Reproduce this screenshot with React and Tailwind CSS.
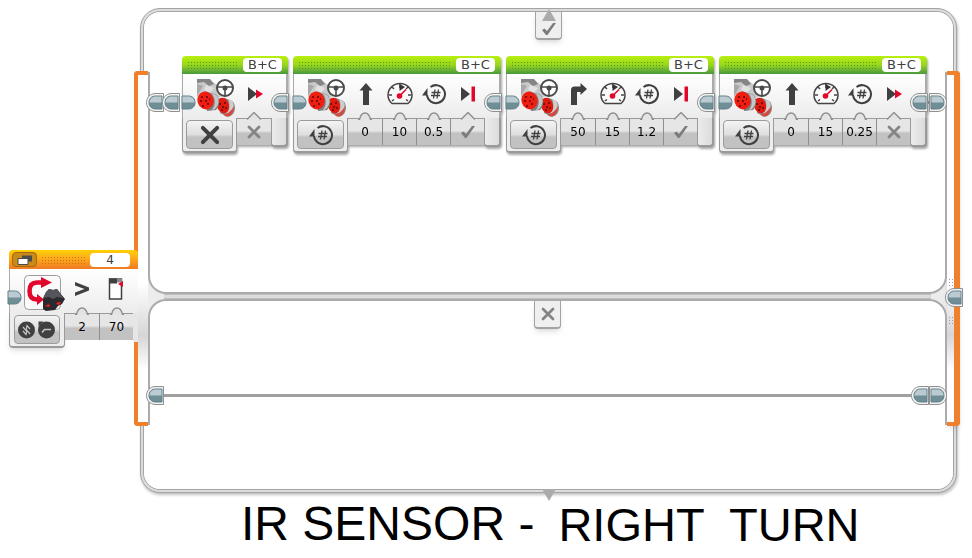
import React from "react";
import clsx from "clsx";

// Connector between blocks. "out" is rounded on the left, "in" on the right.
function Plug({ side = "out", rim = true, className }) {
  return (
    <svg
      viewBox="0 0 18 19"
      className={clsx("w-[18px] h-[19px] shrink-0", side === "in" && "-scale-x-100", className)}
      aria-hidden="true"
    >
      {rim && (
        <path d="M17.500 .5H9C3.500 1 .5 5 .5 9.500S3.500 18 9 18.500h8.500z" fill="#f4f4f4" stroke="#8f8f8f" />
      )}
      <path d="M16 3H9.500C5.500 3 3 5.800 3 9.500S5.500 16 9.500 16H16z" fill="#6f8e96" stroke="#5f7f89" />
      <path d="M15.500 3.500H9.500C6 3.500 3.600 6 3.500 9.500h12z" fill="#bccbd2" />
    </svg>
  );
}

function MotorIcon() {
  return (
    <svg viewBox="0 0 38 38" className="w-[38px] h-[38px]" aria-hidden="true">
      <path d="M0 0h12l8 6 4 12-6 2-9-6-9 4z" fill="#c9c9c9" />
      <path d="M0 0h13l4 5-5 2-5-4-7 1z" fill="#858585" />
      <path d="M0 5l6 2-6 10z" fill="#a8a8a8" />
      <path d="M9 6l8 3-4 5-6-3z" fill="#e2e2e2" />
      {/* back cylinder */}
      <path d="M27 18.500l8 3.500c4 3 4 10 0 14l-4 2-8-4z" fill="#8a8a8a" />
      <path d="M31 20l4 2c3 4 2 10-2 13l-4-1c4-4 4-10 2-14z" fill="#cdcdcd" />
      <path d="M37 27c0 4-1 7-4 10l-4 .500-3-2c4 0 8-3 11-8.500z" fill="#d8483c" />
      <ellipse cx="26" cy="26.500" rx="6" ry="8" fill="#e01a0f" transform="rotate(-18 26 26.500)" />
      <path d="M23 24v2m5-3v2m-3 3h2m2 0v2m-5 1h2" stroke="#5b0703" strokeWidth="1.400" />
      {/* front cylinder */}
      <path d="M8 12.500l10 2.500c5 3 6 11 1 16l-9 1z" fill="#7d7d7d" />
      <path d="M14 14l5 2c4 4 3 10-1 14l-4 2c5-5 5-13 0-18z" fill="#c6c6c6" />
      <ellipse cx="8.500" cy="21.500" rx="8" ry="9" fill="#f01d12" transform="rotate(-18 8.500 21.500)" />
      <path d="M5 17v2m5-2v2M3 22h2m3 0h2m-4 4v2m5-4v2m1-6h1" stroke="#5b0703" strokeWidth="1.500" />
      <circle cx="28" cy="9" r="8" fill="#fff" stroke="#4a4a4a" strokeWidth="2" />
      <path d="M20.500 8h15M28 9v8" stroke="#4a4a4a" strokeWidth="1.600" />
      <circle cx="28" cy="9" r="2.500" fill="#4a4a4a" />
    </svg>
  );
}

function Rotations() {
  return (
    <svg viewBox="0 0 24 24" className="w-6 h-6" fill="none" stroke="#404040" aria-hidden="true">
      <path d="M8.500 5A9 9 0 1 1 5 13" strokeWidth="2" />
      <path d="M0 13.500L5.500 6v7.500z" fill="#404040" stroke="none" />
      <path d="M13 7.500l-1.500 9M16.500 7.500l-1.500 9M9.500 10.500h9M9 13.500h9" strokeWidth="1.300" />
    </svg>
  );
}

function Gauge() {
  return (
    <svg viewBox="0 0 26 24" className="w-[26px] h-6" fill="none" aria-hidden="true">
      <path d="M5 21.500C2.500 19.500 1 16.500 1 13a12 11.500 0 0 1 24 0c0 3.500-1.500 6.500-4 8.500z" fill="#fafafa" stroke="#444" strokeWidth="1.500" />
      <path d="M13 2v4M5 5l2 2M21 5l-2 2M2 13h3M24 13h-3M5 19l2-1.500M21 19l-2-1.500" stroke="#444" strokeWidth="1.500" />
      <path d="M12.500 2l5.500 3-5.500 4z" fill="#333" />
      <path d="M12.500 14l6.500-6.500" stroke="#e2062c" strokeWidth="1.600" />
      <circle cx="12.500" cy="14" r="2.800" fill="#e2062c" />
    </svg>
  );
}

function Straight() {
  return (
    <svg viewBox="0 0 14 22" className="w-[14px] h-[22px]" aria-hidden="true">
      <path d="M7 0l6.500 7.500H10V22H4V7.500H.5z" fill="#404040" />
    </svg>
  );
}

function TurnRight() {
  return (
    <svg viewBox="0 0 17 22" className="w-[17px] h-[22px]" aria-hidden="true">
      <path d="M1 22V7q0-3.500 3.500-3.500h6V0L17 6l-6.500 6V9H7v13z" fill="#404040" />
    </svg>
  );
}

function Brake() {
  return (
    <svg viewBox="0 0 16 16" className="w-4 h-4" aria-hidden="true">
      <path d="M1 1l9 7-9 7z" fill="#404040" />
      <path d="M11.500 .500H15v15h-3.500z" fill="#e2062c" />
    </svg>
  );
}

function Coast() {
  return (
    <svg viewBox="0 0 16 16" className="w-4 h-4" aria-hidden="true">
      <path d="M1 1l9 7-9 7z" fill="#404040" />
      <path d="M9 3.500l7 4.500-7 4.500z" fill="#e2062c" />
    </svg>
  );
}

function Tick({ className }) {
  return (
    <svg viewBox="0 0 14 14" className={clsx("w-[14px] h-[14px]", className)} aria-hidden="true">
      <path d="M0 8l2.500-1.500L5 9l6-8h3L5.500 13H4z" fill="#7c7c7c" />
    </svg>
  );
}

function Cross({ className = "w-[14px] h-[14px] text-[#848484]" }) {
  return (
    <svg viewBox="0 0 14 14" className={className} aria-hidden="true">
      <path d="M2 2l10 10M12 2L2 12" stroke="currentColor" strokeWidth="2.800" strokeLinecap="round" />
    </svg>
  );
}

function InfraredIcon() {
  return (
    <svg viewBox="0 0 42 38" className="w-[42px] h-[38px]" aria-hidden="true">
      <rect x=".5" y=".5" width="36" height="34" rx="4" fill="#fafafa" stroke="#9c9c9c" />
      <path d="M20 7.500h-7c-5 0-7.500 3-7.500 8.500s2.500 8.500 7.500 8.500h2" fill="none" stroke="#e2062c" strokeWidth="4.500" />
      <path d="M17 2l11 5.500L17 13zM13 19l7 5.500-7 5.500z" fill="#e2062c" />
      <path d="M19 24l3-7 3-3 4 1 4-1 3 4 5 6-3 5-4 2-3 4-9 1-3-2z" fill="#29292e" />
      <path d="M21 19l4-5 4 1 4-1 3 4 3 5-6-1-4 2-4-2-6 1z" fill="#54545a" />
      <path d="M21 31c2-1 3-2 5-1l-1 2zM32 29c1-2 3-2 5-2l-2 3z" fill="#f02020" />
    </svg>
  );
}

function CompareIcon() {
  return (
    <svg viewBox="0 0 38 18" className="w-[38px] h-[18px]" fill="none" aria-hidden="true">
      <circle cx="8.500" cy="9" r="8.500" fill="#404040" />
      <circle cx="28.500" cy="9" r="8.500" fill="#404040" />
      <path d="M5 6l3 3.500 1-5 3 3.500M5 10l3 3.500 1-4 3 3.500" stroke="#c4c4c4" strokeWidth="1.200" />
      <path d="M24 11.500l2.500-3H33" stroke="#c4c4c4" strokeWidth="1.600" />
      <path d="M20.500 5.500V.500h5z" fill="#404040" />
    </svg>
  );
}

function PortValue() {
  return (
    <svg viewBox="0 0 16 22" className="w-4 h-[22px]" aria-hidden="true">
      <rect x="1.500" y="1" width="12" height="20" fill="#fff" stroke="#404040" strokeWidth="1.500" />
      <path d="M1 .500h8v5H1z" fill="#404040" />
      <path d="M9 .500h5v4H9z" fill="#8a8a8a" />
      <path d="M10 6l5-3v6z" fill="#e2062c" />
    </svg>
  );
}

function Greater() {
  return (
    <svg viewBox="0 0 16 14" className="w-4 h-[14px]" aria-hidden="true">
      <path d="M1 0l14 5.500v3L1 14v-3.500L10.500 7 1 3.500z" fill="#404040" />
    </svg>
  );
}

// Small shape on the upper edge of a parameter field
function Notch({ pointed }) {
  return (
    <svg viewBox="0 0 14 8" className="absolute -top-[7px] left-[10px] w-[14px] h-2" aria-hidden="true">
      <path
        d={pointed ? "M0 7.500L7 .500l7 7" : "M0 7.500h1.500C2.500 3 4 1 7 1s4.500 2 5.500 6.500H14"}
        fill="#e3e3e3"
        stroke="#8e8e8e"
        strokeWidth="1.400"
      />
    </svg>
  );
}

function Param({ name, value, first }) {
  const isFlag = typeof value === "boolean";
  return (
    <div
      className={clsx(
        "relative w-[34px] h-[27px] border-t border-t-[#9a9a9a] bg-linear-to-b from-[#e6e6e6] from-45% to-[#c2c2c2] to-55%",
        !first && "border-l border-l-[#8e8e8e]"
      )}
    >
      <Notch pointed={isFlag} />
      {isFlag ? (
        <button type="button" aria-label={name} className="flex w-full h-full items-center justify-center">
          {value ? <Tick /> : <Cross />}
        </button>
      ) : (
        <input aria-label={name} defaultValue={value} className="w-full h-full text-center text-xs text-black outline-none" />
      )}
    </div>
  );
}

const dots = "h-2 bg-[radial-gradient(currentColor_1px,transparent_1px)] bg-size-[3px_3px]";

const modeButton =
  "flex h-[29px] w-full items-center justify-center rounded-sm border border-[#9b9b9b] bg-linear-to-b from-[#f4f4f4] via-[#dedede] via-50% to-[#c2c2c2] to-60%";

function Block({ mode, params }) {
  return (
    <article className="relative shrink-0 drop-shadow-[1px_2px_1px_rgba(0,0,0,0.35)]">
      <header className="flex h-[18px] items-center gap-1 rounded-t bg-linear-to-b from-[#b9f010] via-[#98d619] to-[#46983a] pl-[5px] pr-[6px]">
        <span className={clsx(dots, "flex-1 text-[#4f9a22]")} />
        <input
          aria-label="Motor ports"
          defaultValue="B+C"
          className="w-[39px] h-[14px] rounded-sm bg-white text-center text-[13px] text-[#404040] outline-none"
        />
      </header>
      <div className="flex h-[44px] items-start border-l border-r-2 border-[#ababab] bg-linear-to-b from-white to-[#ececec]">
        <div className="w-[54px] pl-[14px] pt-[5px]">
          <MotorIcon />
        </div>
        {params.map((p) => (
          <div key={p.name} className="flex h-10 w-[34px] items-center justify-center pl-px">
            {p.icon}
          </div>
        ))}
        <div className="w-[15px]" />
      </div>
      <div className="flex items-start">
        <div className="w-[55px] h-[35px] rounded-b border-x border-b-2 border-[#9a9a9a] bg-[#ededed] px-[3px] pt-[2px]">
          <button type="button" aria-label="Mode" className={modeButton}>
            {mode}
          </button>
        </div>
        {params.map((p, i) => (
          <Param key={p.name} name={p.name} value={p.value} first={i === 0} />
        ))}
        <div className="w-[17px] h-[29px] rounded-b border-l border-r-2 border-b-2 border-[#9a9a9a] bg-linear-to-r from-[#ececec] to-[#dcdcdc]" />
      </div>
      <Plug side="in" rim={false} className="absolute -left-[2px] top-[37px]" />
      <Plug className="absolute -right-px top-[37px]" />
    </article>
  );
}

function SensorBlock() {
  return (
    <article className="relative z-20 mt-[250px] ml-[9px] w-[129px] shrink-0 self-start">
      <header className="flex h-[19px] items-center gap-1 rounded-t bg-linear-to-b from-[#ffd000] to-[#f07a24] pl-[3px] pr-[8px]">
        <button
          type="button"
          aria-label="Switch view"
          className="flex w-[25px] h-[15px] items-center justify-center rounded-sm border border-[#a8680c] bg-[#c98a1c]"
        >
          <svg viewBox="0 0 16 10" className="w-4 h-[10px]" aria-hidden="true">
            <path d="M5 .500h10v6H5z" fill="#4c4c4c" />
            <path d="M1 3.500h10v6H1z" fill="#fff" stroke="#4c4c4c" />
          </svg>
        </button>
        <span className={clsx(dots, "flex-1 text-[#cf6f0c]")} />
        <input
          aria-label="Sensor port"
          defaultValue="4"
          className="w-10 h-[14px] rounded-sm bg-white text-center text-xs text-[#404040] outline-none"
        />
      </header>
      <div className="flex h-[44px] border-l border-l-[#ababab] bg-linear-to-b from-white to-[#ececec]">
        <div className="w-[55px] pl-[14px] pt-[6px]">
          <InfraredIcon />
        </div>
        <div className="flex h-10 w-[34px] items-center justify-center">
          <Greater />
        </div>
        <div className="flex h-10 w-[34px] items-center justify-center">
          <PortValue />
        </div>
      </div>
      <div className="flex items-start">
        <div className="w-14 h-[35px] rounded-b border-x border-b-2 border-[#9a9a9a] bg-[#ededed] px-1 pt-[2px] shadow-md">
          <button type="button" aria-label="Compare mode" className={modeButton}>
            <CompareIcon />
          </button>
        </div>
        <Param name="Comparison" value="2" first />
        <Param name="Threshold" value="70" />
        <div className="h-[29px] flex-1 bg-[#e6e6e6]" />
      </div>
      <Plug side="in" rim={false} className="absolute -left-[3px] top-[38px]" />
    </article>
  );
}

function Rail({ right }) {
  return (
    <div
      className={clsx(
        "absolute top-[59px] bottom-[63px] z-10 border-y-4 border-[#f0802c] bg-linear-to-b from-white from-60% via-[#d6d6d6] via-75% to-white to-85%",
        right
          ? "-right-[7px] w-[13px] rounded-r border-r-6 shadow-md"
          : "-left-[10px] w-[14px] rounded-l border-l-4"
      )}
    >
      {right && (
        <div className="flex h-full flex-col items-center justify-center gap-[30px] pt-[105px] text-[#9a9a9a]">
          <span className={clsx(dots, "w-[6px]")} />
          <span className={clsx(dots, "w-[6px]")} />
        </div>
      )}
    </div>
  );
}

function CaseTab({ children }) {
  return (
    <button
      type="button"
      aria-label="Case"
      className="mx-auto flex h-7 w-[27px] items-center justify-center rounded-b border-x border-b-2 border-[#a3a3a3] bg-[#efefef] shadow-md"
    >
      {children}
    </button>
  );
}

const direction = { name: "Steering" };
const power = { name: "Power", icon: <Gauge /> };
const rotations = { name: "Rotations", icon: <Rotations /> };
const brake = { name: "Brake at end", icon: <Brake />, value: true };
const coast = { name: "Brake at end", icon: <Coast />, value: false };

const blocks = [
  { mode: <Cross className="w-5 h-5 text-[#404040]" />, params: [coast] },
  {
    mode: <Rotations />,
    params: [
      { ...direction, icon: <Straight />, value: "0" },
      { ...power, value: "10" },
      { ...rotations, value: "0.5" },
      brake,
    ],
  },
  {
    mode: <Rotations />,
    params: [
      { ...direction, icon: <TurnRight />, value: "50" },
      { ...power, value: "15" },
      { ...rotations, value: "1.2" },
      brake,
    ],
  },
  {
    mode: <Rotations />,
    params: [
      { ...direction, icon: <Straight />, value: "0" },
      { ...power, value: "15" },
      { ...rotations, value: "0.25" },
      coast,
    ],
  },
];

export default function App() {
  return (
    <main className="flex min-h-screen bg-white font-['DejaVu_Sans',sans-serif]">
      <SensorBlock />

      <div className="ml-[2px] mr-[15px] mt-2 flex-1">
        <section className="relative rounded-[20px] border-4 border-double border-[#a4a4a4] bg-[#dcdcdc] shadow-[1px_2px_3px_rgba(0,0,0,0.25)]">
          <Rail />
          <Rail right />

          <div className="rounded-2xl bg-white">
            {/* True case */}
            <div className="h-[60px]">
              <CaseTab>
                <Tick className="mt-2" />
              </CaseTab>
            </div>
            <div className="ml-1 mr-[6px] bg-[#ececec]">
              <div className="relative z-10 flex flex-col rounded-b-[18px] border-2 border-t-0 border-[#ababab] bg-white pb-[139px]">
                <div className="-mt-4 flex items-start">
                  <Plug className="-ml-1 mt-[37px]" />
                  <Plug className="-ml-[2px] mt-[37px]" />
                  <div className="ml-[2px] flex gap-[5px]">
                    {blocks.map((block, i) => (
                      <Block key={i} {...block} />
                    ))}
                  </div>
                  <span className="mt-[45px] h-[3px] flex-1 bg-[#a8a8a8]" />
                  <Plug side="in" className="-mr-[2px] mt-[37px]" />
                </div>
              </div>

              <div className="mx-4 h-[5px] border-y border-[#c0c0c0] bg-[#dcdcdc]" />

              {/* False case */}
              <div className="relative z-10 rounded-t-[18px] border-2 border-b-0 border-[#ababab] bg-white pb-5">
                <CaseTab>
                  <Cross />
                </CaseTab>
                <div className="mt-[57px] flex items-center">
                  <Plug className="-ml-1" />
                  <span className="h-[3px] flex-1 bg-[#a0a0a0]" />
                  <Plug />
                  <Plug side="in" className="-mr-[2px]" />
                </div>
              </div>
            </div>
            <div className="h-[64px]" />
          </div>

          {/* Resize handles and the exit connector */}
          <svg viewBox="0 0 14 12" className="absolute -top-[3px] left-1/2 w-[14px] h-3 -translate-x-1/2" aria-hidden="true">
            <path d="M7 0l7 12H0z" fill="#ababab" />
          </svg>
          <svg viewBox="0 0 14 12" className="absolute -bottom-3 left-1/2 w-[14px] h-3 -translate-x-1/2" aria-hidden="true">
            <path d="M0 0h14L7 12z" fill="#ababab" />
          </svg>
          <Plug className="absolute -right-[10px] top-[276px] z-20" />
        </section>

        <h1 className="mt-[7px] flex items-end gap-6 whitespace-pre pl-[101px] font-['Liberation_Sans',sans-serif] text-[48px] leading-none text-black">
          <span>IR SENSOR -</span>
          <span className="text-[47px]">RIGHT  TURN</span>
        </h1>
      </div>
    </main>
  );
}
